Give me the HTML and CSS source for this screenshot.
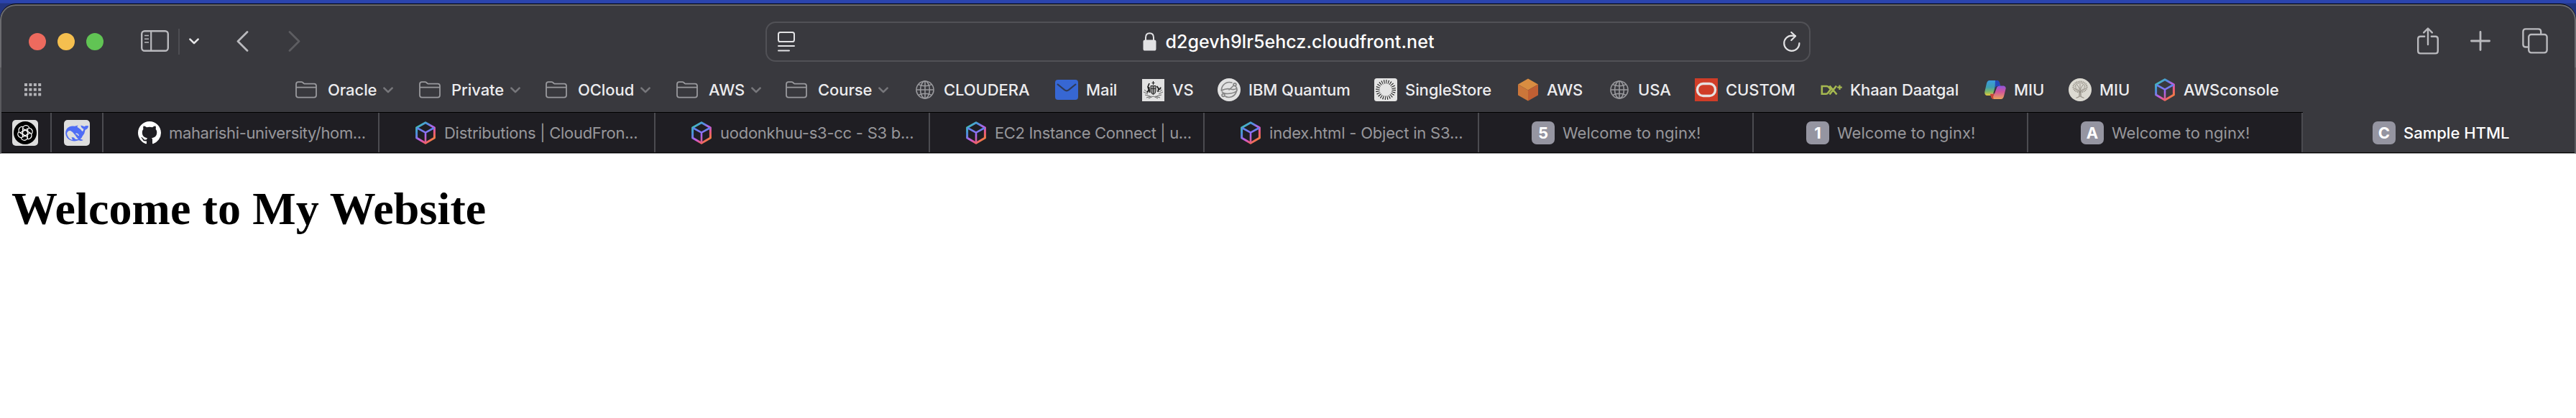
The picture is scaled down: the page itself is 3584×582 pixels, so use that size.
FILE: index.html
```html
<!DOCTYPE html>
<html lang="en">
<head>
<meta charset="utf-8">
<title>Sample HTML</title>
<link rel="stylesheet" href="styles.css">
</head>
<body>
<svg class="sprite" aria-hidden="true">
  <defs>
    <linearGradient id="cube-outer" x1="0.1" y1="0.1" x2="0.8" y2="0.95">
      <stop offset="0" stop-color="#45c0b8"/><stop offset=".25" stop-color="#4b8fe0"/><stop offset=".55" stop-color="#c25be6"/><stop offset=".8" stop-color="#ee5a76"/><stop offset="1" stop-color="#f08040"/>
    </linearGradient>
    <linearGradient id="cube-inner" x1="0" y1="0" x2="0" y2="32" gradientUnits="userSpaceOnUse">
      <stop offset=".3" stop-color="#5a86ee"/><stop offset=".6" stop-color="#a765f2"/><stop offset="1" stop-color="#ee5a66"/>
    </linearGradient>
    <linearGradient id="cop-a" x1="0" y1="0" x2="0" y2="1">
      <stop offset="0" stop-color="#3a9be0"/><stop offset=".45" stop-color="#3f9fb0"/><stop offset=".75" stop-color="#7fb866"/><stop offset="1" stop-color="#e5c93c"/>
    </linearGradient>
    <linearGradient id="cop-b" x1="0" y1="0" x2="0" y2="1">
      <stop offset="0" stop-color="#8d55dd"/><stop offset=".45" stop-color="#d0559a"/><stop offset="1" stop-color="#eba35c"/>
    </linearGradient>
    <symbol id="cube" viewBox="0 0 28 32">
      <path d="M14 1.8 26.4 8.8V23L14 30.2 1.6 23V8.8Z" fill="none" stroke="url(#cube-outer)" stroke-width="3" stroke-linejoin="round"/>
      <path d="M2 9 14 15.6 26 9M14 15.6V30" fill="none" stroke="url(#cube-inner)" stroke-width="2.6"/>
    </symbol>
    <symbol id="folder" viewBox="0 0 30 24">
      <path d="M1 19.5V4.2Q1 1.2 4 1.2H8.2Q9.6 1.2 10.6 2.2L11.4 3Q12.4 3.7 13.8 3.7H26Q29 3.7 29 6.7V19.5Q29 22.7 26 22.7H4Q1 22.7 1 19.5ZM1 8.6H29" fill="none" stroke="currentColor" stroke-width="1.8"/>
    </symbol>
    <symbol id="globe" viewBox="0 0 26 26">
      <g fill="none" stroke="currentColor" stroke-width="1.6"><circle cx="13" cy="13" r="12"/><ellipse cx="13" cy="13" rx="6.4" ry="12"/><path d="M13 1V25M1 13H25M3.8 5.6Q13 10 22.2 5.6M3.8 20.4Q13 16 22.2 20.4"/></g>
    </symbol>
    <symbol id="chev" viewBox="0 0 14 9">
      <path d="M1.4 1.6 7 7.2 12.6 1.6" fill="none" stroke="currentColor" stroke-width="2.6" stroke-linecap="round" stroke-linejoin="round"/>
    </symbol>
  </defs>
</svg>

<div class="desktop">
<div class="window">
  <header class="toolbar">
    <div class="lights"><i class="light red"></i><i class="light yellow"></i><i class="light green"></i></div>
    <svg class="ic sidebar" width="39" height="30" viewBox="0 0 39 30"><g fill="none" stroke="currentColor"><rect x="1.2" y="1.2" width="36.6" height="27.6" rx="4" stroke-width="2.4"/><path d="M14.2 1V29" stroke-width="2.2"/><path d="M5 7.5H11M5 12.2H11M5 17H11" stroke-width="1.6"/></g></svg>
    <i class="divider"></i>
    <svg class="ic menu-chev" width="14" height="9"><use href="#chev"/></svg>
    <svg class="ic back" width="17" height="29" viewBox="0 0 17 29"><path d="M15 1.5 2 14.5 15 27.5" fill="none" stroke="currentColor" stroke-width="2.8" stroke-linecap="round" stroke-linejoin="round"/></svg>
    <svg class="ic forward" width="17" height="29" viewBox="0 0 17 29"><path d="M2 1.5 15 14.5 2 27.5" fill="none" stroke="currentColor" stroke-width="2.8" stroke-linecap="round" stroke-linejoin="round"/></svg>
    <div class="address">
      <svg class="reader" width="24" height="28" viewBox="0 0 24 28"><g fill="none" stroke="currentColor" stroke-width="2" stroke-linecap="round"><rect x="1" y="1" width="22" height="13" rx="2.6"/><path d="M1 20H23M1 26.4H16"/></g></svg>
      <div class="url">
        <svg width="19" height="26" viewBox="0 0 19 26"><path d="M4 11V7.5Q4 1.2 9.5 1.2T15 7.5V11" fill="none" stroke="currentColor" stroke-width="2"/><rect x=".5" y="10.5" width="18" height="15" rx="2.6" fill="currentColor"/></svg>
        <span>d2gevh9lr5ehcz.cloudfront.net</span>
      </div>
      <svg class="reload" width="24" height="28" viewBox="0 0 24 28"><g fill="none" stroke="currentColor" stroke-width="2.2" stroke-linecap="round" stroke-linejoin="round"><path d="M22.4 16.2A10.6 10.6 0 1 1 11.8 5.7L17 6.2"/><path d="M11.3 1 17 6.3 11.3 12"/></g></svg>
    </div>
    <div class="actions">
      <svg width="30" height="38" viewBox="0 0 30 38"><g fill="none" stroke="currentColor" stroke-width="2.4" stroke-linecap="round" stroke-linejoin="round"><path d="M10.2 12.7H4.6Q1.2 12.7 1.2 16V33Q1.2 36.4 4.6 36.4H25.4Q28.8 36.4 28.8 33V16Q28.8 12.7 25.4 12.7H19.8"/><path d="M15 24V1.8M9.2 7.4 15 1.5 20.8 7.4"/></g></svg>
      <svg class="plus" width="28" height="28" viewBox="0 0 28 28"><path d="M14 1.4V26.6M1.4 14H26.6" stroke="currentColor" stroke-width="2.8" stroke-linecap="round"/></svg>
      <svg width="36" height="36" viewBox="0 0 36 36"><g fill="none" stroke="currentColor" stroke-width="2.4"><path d="M9 26.5H5Q1.4 26.5 1.4 23V5Q1.4 1.4 5 1.4H22.5Q26.2 1.4 26.2 5V9"/><rect x="9.2" y="9" width="25.4" height="25.4" rx="3.6"/></g></svg>
    </div>
  </header>

  <nav class="bookmarks">
    <svg class="apps" width="24" height="18" viewBox="0 0 24 18"><path d="M2 0V18M8.4 0V18M14.8 0V18M21.2 0V18" stroke="currentColor" stroke-width="4" stroke-dasharray="4 2.7"/></svg>
    <div class="items">
      <a class="bm bm-oracle"><svg class="fold"><use href="#folder"/></svg><span>Oracle</span><svg class="chev"><use href="#chev"/></svg></a>
      <a class="bm bm-private"><svg class="fold"><use href="#folder"/></svg><span>Private</span><svg class="chev"><use href="#chev"/></svg></a>
      <a class="bm bm-ocloud"><svg class="fold"><use href="#folder"/></svg><span>OCloud</span><svg class="chev"><use href="#chev"/></svg></a>
      <a class="bm bm-aws"><svg class="fold"><use href="#folder"/></svg><span>AWS</span><svg class="chev"><use href="#chev"/></svg></a>
      <a class="bm bm-course"><svg class="fold"><use href="#folder"/></svg><span>Course</span><svg class="chev"><use href="#chev"/></svg></a>
      <a class="bm bm-cloudera"><svg class="globe"><use href="#globe"/></svg><span>CLOUDERA</span></a>
      <a class="bm bm-mail"><svg class="fav" viewBox="0 0 32 32"><rect y="2" width="32" height="28" rx="4" fill="#3767d3"/><path d="M3 8 13 16.2Q16 18.4 19 16.2L29 8" fill="none" stroke="#2f3b58" stroke-width="2.2"/></svg><span>Mail</span></a>
      <a class="bm bm-vs"><svg class="fav" viewBox="0 0 32 32"><rect x="1" y="1" width="31" height="31" fill="#e2e2e2"/><g stroke="#222" fill="none"><path d="M16.5 4V9M14.5 6.5H18.5" stroke-width="1.2"/><path d="M13 10.5H20V18Q19.5 21.5 16.5 22.5 13.5 21.5 13 18Z" fill="#999" stroke-width="1"/><path d="M13 14.5H20M16.5 10.5V22" stroke-width=".9"/><path d="M11 7 9 12 10.3 16 8 20M10.5 12 11.5 20" stroke-width="1.7"/><path d="M21.5 11 24 14.5 23 19M23.5 15Q27 16 26.5 12.500" stroke-width="1.9"/><path d="M4 16 8 19M3 19 9 22M5 23 12 25M7 27 14 25M29 16 25 19M30 19 24 22M28 23 21 25M26 27 19 25M10 28 16.5 25 23 28" stroke-width="1" stroke="#666"/></g></svg><span>VS</span></a>
      <a class="bm bm-ibm"><svg class="fav" viewBox="0 0 32 32"><circle cx="16" cy="16" r="16" fill="#e2e2e2"/><g fill="none" stroke="#858585" stroke-width="1.7"><path d="M20.5 6.2Q13 3.8 8 9.5 5 13 5.5 18M5.5 17Q12 13.5 18 15T26.5 14M6 18.5Q8 21.5 14 21.5 24 21 27 17 27 12 24.5 11M26.5 18Q24 26 16 26.5 12.5 26.5 10.5 25M15.5 16.5 22.5 10"/><circle cx="24" cy="8.8" r="1.9"/><circle cx="8" cy="23.5" r="1.9"/></g></svg><span>IBM Quantum</span></a>
      <a class="bm bm-single"><svg class="fav" viewBox="0 0 32 32"><rect width="32" height="32" rx="3.5" fill="#e4e4e4"/><circle cx="16" cy="16" r="11.2" fill="none" stroke="#1a1a1a" stroke-width="5.4" stroke-dasharray="1 1.932"/></svg><span>SingleStore</span></a>
      <a class="bm bm-aws2"><svg class="box" viewBox="0 0 28 32"><path d="M14 .5 28 8.5 14 16.5 0 8.5Z" fill="#d98d41"/><path d="M0 8.5 14 16.5V31.5L0 23.5Z" fill="#cb763a"/><path d="M28 8.5 14 16.5V31.5L28 23.5Z" fill="#c05f33"/></svg><span>AWS</span></a>
      <a class="bm bm-usa"><svg class="globe"><use href="#globe"/></svg><span>USA</span></a>
      <a class="bm bm-custom"><svg class="fav" viewBox="0 0 32 32"><rect width="32" height="32" fill="#d03d28"/><rect x="3.5" y="7.5" width="25" height="17" rx="8" fill="none" stroke="#e6e0df" stroke-width="3.4"/></svg><span>CUSTOM</span></a>
      <a class="bm bm-khaan"><svg class="dx" viewBox="0 0 30 32"><g fill="none" stroke="#a5b850" stroke-width="2.6"><path d="M1.8 11H8.5Q10 11 11.2 12.2L14 15.5 10.5 20Q9.2 21.7 7.5 21.7H1.800ZM12.5 10.5 22.5 22.5M22 10.5 12.5 22.5"/><path d="M26.5 9.5V16M23.2 12.7H29.8" stroke-width="2.2"/></g></svg><span>Khaan Daatgal</span></a>
      <a class="bm bm-miu"><svg class="cop" viewBox="0 0 30 32"><path d="M7 3H17Q20 3 21 7L22 11H19L15 11 12 22Q11 24 8.5 24H3Q-.5 23 .5 18L3 7Q4.2 3 7 3Z" fill="url(#cop-a)"/><path d="M15 3H17.5Q20.5 3 21.3 7L22.3 11H18Q15.5 11 14.5 14Z" fill="#2348b8"/><path d="M23 29H13Q10 29 9 25L8 21.5H14L17.5 12Q18.5 10.5 21.5 10.5H27Q30.5 11.5 29.5 15L27 25Q25.8 29 23 29Z" fill="url(#cop-b)"/><path d="M8 22H13.5L12 26 12.8 29Q10 29 9 25.5Z" fill="#c84436"/></svg><span>MIU</span></a>
      <a class="bm bm-miu2"><svg class="fav" viewBox="0 0 32 32"><circle cx="16" cy="16" r="16" fill="#dcdad2"/><g fill="none" stroke="#98938a"><ellipse cx="16" cy="12" rx="9.5" ry="7.500" stroke-width="2" stroke-dasharray="1.3 1"/><ellipse cx="16" cy="11.5" rx="6.5" ry="5" stroke-width="1.8" stroke-dasharray="1.1 1"/><path d="M16 8V26M16 19 8 14M16 19 24 14M16 16 12 9M16 16 20 9" stroke-width="1"/><path d="M15.2 17 14.8 25.5 10.5 27.500M16.8 17 17.2 25.5 21.5 27.500" stroke-width="1.2"/></g></svg><span>MIU</span></a>
      <a class="bm bm-console"><svg class="box"><use href="#cube"/></svg><span>AWSconsole</span></a>
    </div>
  </nav>

  <div class="tabs">
    <div class="pin pin-a"><svg width="36" height="36" viewBox="0 0 36 36"><rect width="36" height="36" rx="5" fill="#dedede"/><circle cx="18" cy="18" r="16" fill="#000"/><g fill="none" stroke="#fff" stroke-width="1.3" stroke-linejoin="round"><path id="petal" d="M14.6 19.900V12.300A4.600 4.600 0 0 1 23.750 11.600M21.600 15.900 14.800 12"/><use href="#petal" transform="rotate(60 18 18)"/><use href="#petal" transform="rotate(120 18 18)"/><use href="#petal" transform="rotate(180 18 18)"/><use href="#petal" transform="rotate(240 18 18)"/><use href="#petal" transform="rotate(300 18 18)"/></g></svg></div>
    <div class="pin pin-b"><svg width="36" height="36" viewBox="0 0 36 36"><rect width="36" height="36" rx="5" fill="#dedede"/><path d="M2.2 19Q2 12 7.5 9.5 11 8 15 8.8L19.5 7.5 18.3 9.8Q23 12.5 25.5 16 27.5 15 27.3 12.5 24 11.5 23.3 7.5 26 8 28.3 9.3 30.5 7.3 34 8.2 33.7 12.5 29.6 13.8 29 19 25.8 22.5 25 25 22.6 26.5L26.8 28Q24 30 20.5 28.3 15 30.5 9.5 28.5 3 26 2.2 19Z" fill="#4f6df5"/><path d="M4 19Q5 14.5 9 15 12 16 15 20.5T20 27Q15 27.5 14 24.5L10.5 24 12 28Q5.5 26.5 4 19Z" fill="#dedede"/><path d="M16.5 19.5Q19 18.5 20.5 22" stroke="#dedede" stroke-width="1.5" fill="none"/></svg></div>
    <div class="tab wide t-git"><svg class="fav" viewBox="0 0 16 16"><path fill="#fff" d="M8 0C3.580 0 0 3.580 0 8c0 3.540 2.290 6.530 5.470 7.590.4.070.550-.170.550-.380 0-.190-.010-.820-.010-1.490-2.010.370-2.530-.490-2.690-.940-.090-.230-.480-.940-.820-1.130-.280-.150-.680-.520-.010-.530.630-.010 1.080.580 1.230.820.720 1.210 1.870.870 2.330.660.070-.520.280-.870.510-1.070-1.780-.2-3.640-.890-3.640-3.950 0-.870.310-1.590.820-2.150-.080-.2-.360-1.020.080-2.120 0 0 .670-.210 2.200.820.640-.180 1.320-.270 2-.270s1.360.090 2 .270c1.530-1.040 2.200-.820 2.200-.820.440 1.100.160 1.920.080 2.120.510.560.820 1.270.820 2.150 0 3.070-1.870 3.750-3.650 3.950.290.250.540.730.540 1.480 0 1.070-.010 1.930-.010 2.200 0 .210.150.460.550.380A8.010 8.010 0 0 0 16 8c0-4.420-3.580-8-8-8Z"/></svg><span>maharishi-university/hom...</span></div>
    <div class="tab wide t-dist"><svg class="box"><use href="#cube"/></svg><span>Distributions | CloudFron...</span></div>
    <div class="tab t-s3"><svg class="box"><use href="#cube"/></svg><span>uodonkhuu-s3-cc - S3 b...</span></div>
    <div class="tab t-ec2"><svg class="box"><use href="#cube"/></svg><span>EC2 Instance Connect | u...</span></div>
    <div class="tab t-obj"><svg class="box"><use href="#cube"/></svg><span>index.html - Object in S3...</span></div>
    <div class="tab t-nginx"><b class="badge">5</b><span>Welcome to nginx!</span></div>
    <div class="tab t-nginx"><b class="badge">1</b><span>Welcome to nginx!</span></div>
    <div class="tab t-nginx"><b class="badge">A</b><span>Welcome to nginx!</span></div>
    <div class="tab active"><b class="badge">C</b><span>Sample HTML</span></div>
  </div>

  <main class="page"><h1>Welcome to My Website</h1></main>
</div>
</div>
</body>
</html>
```

FILE: styles.css
```css
* { box-sizing: border-box; }
body { margin: 0; background: #fff; font-family: Inter, "Liberation Sans", sans-serif; }
svg { flex: none; display: block; }
.sprite { position: absolute; width: 0; height: 0; }

.desktop { width: 3584px; height: 582px; padding-top: 5px; overflow: hidden; background: linear-gradient(#2b44ad 0 4px, #23357f 5px, #23357f 40px, #fff 60px); }
.window { height: 577px; border-top: 1px solid #000; border-radius: 22px 22px 0 0; background: #39393e; overflow: hidden; }

.toolbar { display: flex; align-items: center; height: 88px; border-radius: 22px 22px 0 0; padding: 14px 37px 0 38px; border: solid #6b6b6f; border-width: 2px 2px 0; color: #b9b9bd; }
.lights { display: flex; gap: 16px; }
.light { width: 24px; height: 24px; border-radius: 50%; }
.red { background: #ed6a5e; }
.yellow { background: #f5bf4f; }
.green { background: #61c454; }
.toolbar .ic { margin-top: -2px; }
.toolbar .sidebar { margin-left: 52px; }
.divider { width: 2px; height: 36px; margin: 0 13px; background: #4d4d52; }
.menu-chev { color: #e6e6e8; }
.toolbar .back { margin-left: 52px; }
.toolbar .forward { margin-left: 55px; color: #5d5d61; }

.address { display: flex; align-items: center; justify-content: space-between; width: 1454px; height: 56px; margin-left: 647px; padding: 0 12px 0 15px; border: 2px solid #515156; border-radius: 14px; color: #e2e2e4; }
.url { display: flex; align-items: center; gap: 12px; margin-right: 1px; font-size: 25px; font-weight: 500; letter-spacing: .07px; color: #fff; }
.url svg { color: #e2e2e4; }
.actions { display: flex; align-items: center; gap: 44px; margin: -3px 0 0 auto; }

.bookmarks { display: flex; align-items: center; height: 62px; padding-left: 34px; border-left: 2px solid #59595d; border-right: 2px solid #59595d; color: #9a9a9e; }
.apps { color: #b3b3b7; margin-left: -2px; }
.items { display: flex; align-items: center; margin-left: 353px; }
.bm { display: flex; align-items: center; height: 32px; font-size: 22px; font-weight: 500; letter-spacing: -.08px; white-space: nowrap; }
.bm span { color: #ececee; }
.fold { width: 30px; height: 24px; margin-right: 15px; }
.chev { width: 14px; height: 9px; margin-left: 9px; color: #77777b; }
.globe { width: 26px; height: 26px; margin-right: 13px; }
.fav { width: 32px; height: 32px; margin-right: 11px; }
.box { width: 28px; height: 32px; margin-right: 12px; }
.dx, .cop { width: 30px; height: 32px; margin-right: 11px; }
.bm-oracle { width: 172px; }
.bm-private { width: 176px; }
.bm-ocloud { width: 182px; }
.bm-aws { width: 152px; }
.bm-course { width: 181px; }
.bm-cloudera { width: 194px; }
.bm-mail { width: 120px; }
.bm-vs { width: 106px; }
.bm-ibm { width: 218px; }
.bm-single { width: 200px; }
.bm-aws2 { width: 128px; }
.bm-usa { width: 118px; }
.bm-custom { width: 175px; }
.bm-khaan { width: 228px; }
.bm-miu { width: 117px; }
.bm-miu2 { width: 120px; }

.tabs { display: flex; height: 58px; border-left: 2px solid #59595d; border-right: 2px solid #59595d; border-bottom: 1px solid #88888a; }
.pin, .tab { display: flex; align-items: center; background: #1f1e23; border: solid #000; border-width: 1px 0; box-shadow: inset -2px 0 #4b4b50; }
.pin-a { width: 70px; padding-left: 15px; }
.pin-b { width: 72px; padding-left: 17px; }
.tab { width: 382px; font-size: 22px; color: #97979b; white-space: nowrap; }
.wide { width: 384px; }
.t-git { padding-left: 48px; letter-spacing: -.36px; }
.t-dist, .t-s3, .t-ec2, .t-obj { padding-left: 50px; }
.t-dist { letter-spacing: -.27px; }
.t-s3 { letter-spacing: -.25px; }
.t-ec2 { letter-spacing: -.35px; }
.t-obj { letter-spacing: -.2px; }
.t-nginx { padding-left: 73px; }
.active { flex: 1; padding-left: 97px; background: #39393e; border-top-color: #39393e; box-shadow: none; color: #fff; font-weight: 500; }
.badge { display: grid; place-items: center; width: 32px; height: 32px; margin-right: 11px; border-radius: 7px; background: #9595a1; color: #fff; font-size: 22px; font-weight: 700; }

.page { height: 368px; padding: 1px 16px; background: #fff; }
.page h1 { margin: 39px 0; font: 700 64px "Liberation Serif", "Times New Roman", serif; letter-spacing: .1px; color: #000; }
```
